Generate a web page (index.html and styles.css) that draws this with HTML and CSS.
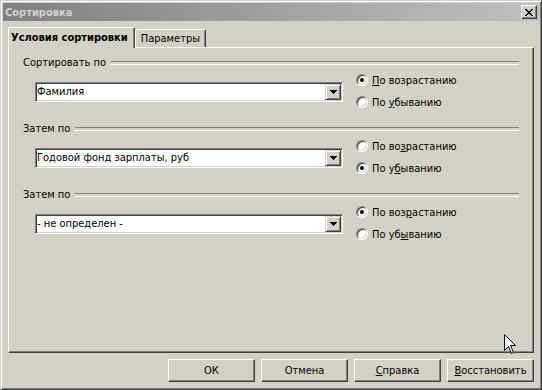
FILE: index.html
```html
<!DOCTYPE html>
<html lang="ru">
<head>
    <meta charset="UTF-8">
    <meta name="viewport" content="width=device-width, initial-scale=1.0">
    <title>Сортировка</title>
    <link rel="stylesheet" href="styles.css">
</head>
<body>
    <div class="window">
        <div class="titlebar">
            <span class="title">Сортировка</span>
            <button class="close" aria-label="Закрыть">
                <svg width="8" height="7" viewBox="0 0 8 7"><path fill="#000" d="M0 0h2v1H0zM6 0h2v1H6zM1 1h2v1H1zM5 1h2v1H5zM2 2h4v1H2zM3 3h2v1H3zM2 4h4v1H2zM1 5h2v1H1zM5 5h2v1H5zM0 6h2v1H0zM6 6h2v1H6z"/></svg>
            </button>
        </div>

        <div class="content">
            <div class="tabs">
                <div class="tab active">Условия сортировки</div>
                <div class="tab">Параметры</div>
            </div>

            <div class="panel">
                <div class="group">
                    <div class="group-title">Сортировать по</div>
                    <div class="group-body">
                        <div class="combo">
                            <span class="combo-text">Фамилия</span>
                            <span class="combo-btn"><svg width="7" height="4" viewBox="0 0 7 4"><path fill="#000" d="M0 0h7v1H0zM1 1h5v1H1zM2 2h3v1H2zM3 3h1v1H3z"/></svg></span>
                        </div>
                        <div class="radios">
                            <label class="radio-row"><span class="radio checked"></span><span><u>П</u>о возрастанию</span></label>
                            <label class="radio-row"><span class="radio"></span><span>По <u>у</u>быванию</span></label>
                        </div>
                    </div>
                </div>

                <div class="group">
                    <div class="group-title">Затем по</div>
                    <div class="group-body">
                        <div class="combo">
                            <span class="combo-text">Годовой фонд зарплаты, руб</span>
                            <span class="combo-btn"><svg width="7" height="4" viewBox="0 0 7 4"><path fill="#000" d="M0 0h7v1H0zM1 1h5v1H1zM2 2h3v1H2zM3 3h1v1H3z"/></svg></span>
                        </div>
                        <div class="radios">
                            <label class="radio-row"><span class="radio"></span><span>По во<u>з</u>растанию</span></label>
                            <label class="radio-row"><span class="radio checked"></span><span>По у<u>б</u>ыванию</span></label>
                        </div>
                    </div>
                </div>

                <div class="group">
                    <div class="group-title">Затем по</div>
                    <div class="group-body">
                        <div class="combo">
                            <span class="combo-text">- не определен -</span>
                            <span class="combo-btn"><svg width="7" height="4" viewBox="0 0 7 4"><path fill="#000" d="M0 0h7v1H0zM1 1h5v1H1zM2 2h3v1H2zM3 3h1v1H3z"/></svg></span>
                        </div>
                        <div class="radios">
                            <label class="radio-row"><span class="radio checked"></span><span>По воз<u>р</u>астанию</span></label>
                            <label class="radio-row"><span class="radio"></span><span>По уб<u>ы</u>ванию</span></label>
                        </div>
                    </div>
                </div>
            </div>

            <div class="buttons">
                <button class="btn">ОК</button>
                <button class="btn">Отмена</button>
                <button class="btn"><u>С</u>правка</button>
                <button class="btn"><u>В</u>осстановить</button>
            </div>
        </div>

        <svg class="cursor" width="12" height="20" viewBox="0 0 12 20"><path d="M0.5 0.5V16.5L4.5 12.5L7.5 19.5L9.5 18.5L6.5 11.5H11.5Z" fill="#fff" stroke="#000" stroke-width="1"/></svg>
    </div>
</body>
</html>
```

FILE: styles.css
```css
* {
    box-sizing: border-box;
}
body {
    margin: 0;
    background: #d4d0c8;
    font-family: "DejaVu Sans Condensed", "Liberation Sans", Arial, sans-serif;
    font-size: 11px;
    color: #000;
}
.window {
    position: relative;
    width: 542px;
    height: 390px;
    display: flex;
    flex-direction: column;
    padding: 2px;
    border: 1px solid;
    border-color: #d4d0c8 #404040 #404040 #d4d0c8;
    box-shadow: inset 1px 1px #fff, inset -1px -1px #808080;
}
.titlebar {
    height: 18px;
    display: flex;
    align-items: center;
    justify-content: space-between;
    padding: 0 2px;
    background: linear-gradient(to right, #808080, #c0c0c0);
}
.title {
    font-weight: bold;
    color: #d4d0c8;
}
.close {
    width: 16px;
    height: 14px;
    padding: 0;
    display: flex;
    align-items: center;
    justify-content: center;
    background: #d4d0c8;
    border: 1px solid;
    border-color: #fff #404040 #404040 #fff;
    box-shadow: inset -1px -1px #808080;
}
.content {
    flex: 1;
    display: flex;
    flex-direction: column;
    padding: 6px 5px 5px 5px;
}
.tabs {
    height: 20px;
    display: flex;
    align-items: flex-end;
}
.tab {
    height: 18px;
    display: flex;
    align-items: center;
    padding: 0 5px 1px 5px;
    border: 1px solid;
    border-bottom: none;
    border-color: #fff #404040 #fff #fff;
    box-shadow: inset -1px 0 #808080;
    border-radius: 2px 2px 0 0;
}
.tab.active {
    position: relative;
    z-index: 1;
    height: 21px;
    margin-bottom: -1px;
    padding: 0 6px 2px 2px;
    font-weight: bold;
    background: #d4d0c8;
}
.panel {
    flex: 1;
    padding: 8px 14px 0 14px;
    border: 1px solid;
    border-color: #fff #404040 #404040 #fff;
    box-shadow: inset -1px -1px #808080;
}
.group {
    margin-bottom: 9px;
}
.group-title {
    height: 13px;
    display: flex;
    align-items: center;
}
.group-title::after {
    content: "";
    flex: 1;
    height: 2px;
    margin-left: 5px;
    border-top: 1px solid #808080;
    border-bottom: 1px solid #fff;
}
.group-body {
    height: 44px;
    display: flex;
    padding-left: 12px;
}
.combo {
    width: 308px;
    height: 20px;
    margin-top: 13px;
    display: flex;
    padding: 1px;
    background: #fff;
    border: 1px solid;
    border-color: #808080 #fff #fff #808080;
    box-shadow: inset 1px 1px #404040, inset -1px -1px #d4d0c8;
}
.combo-text {
    flex: 1;
    line-height: 16px;
}
.combo-btn {
    width: 16px;
    height: 16px;
    display: flex;
    align-items: center;
    justify-content: center;
    background: #d4d0c8;
    border: 1px solid;
    border-color: #d4d0c8 #404040 #404040 #d4d0c8;
    box-shadow: inset 1px 1px #fff, inset -1px -1px #808080;
}
.radios {
    margin-left: 13px;
    display: flex;
    flex-direction: column;
}
.radio-row {
    height: 22px;
    display: flex;
    align-items: center;
    gap: 4px;
}
.radio {
    width: 12px;
    height: 12px;
    display: flex;
    align-items: center;
    justify-content: center;
    border-radius: 50%;
    background: #fff;
    border: 1px solid;
    border-color: #808080 #fff #fff #808080;
    box-shadow: inset 1px 1px #404040, inset -1px -1px #d4d0c8;
}
.radio.checked::after {
    content: "";
    width: 4px;
    height: 4px;
    border-radius: 50%;
    background: #000;
}
.buttons {
    display: flex;
    justify-content: flex-end;
    gap: 6px;
    margin-top: 6px;
}
.btn {
    width: 87px;
    height: 23px;
    padding: 0;
    font-family: inherit;
    font-size: 11px;
    color: #000;
    background: #d4d0c8;
    border: 1px solid;
    border-color: #fff #404040 #404040 #fff;
    box-shadow: inset -1px -1px #808080;
}
.cursor {
    position: absolute;
    left: 503px;
    top: 333px;
}
```
